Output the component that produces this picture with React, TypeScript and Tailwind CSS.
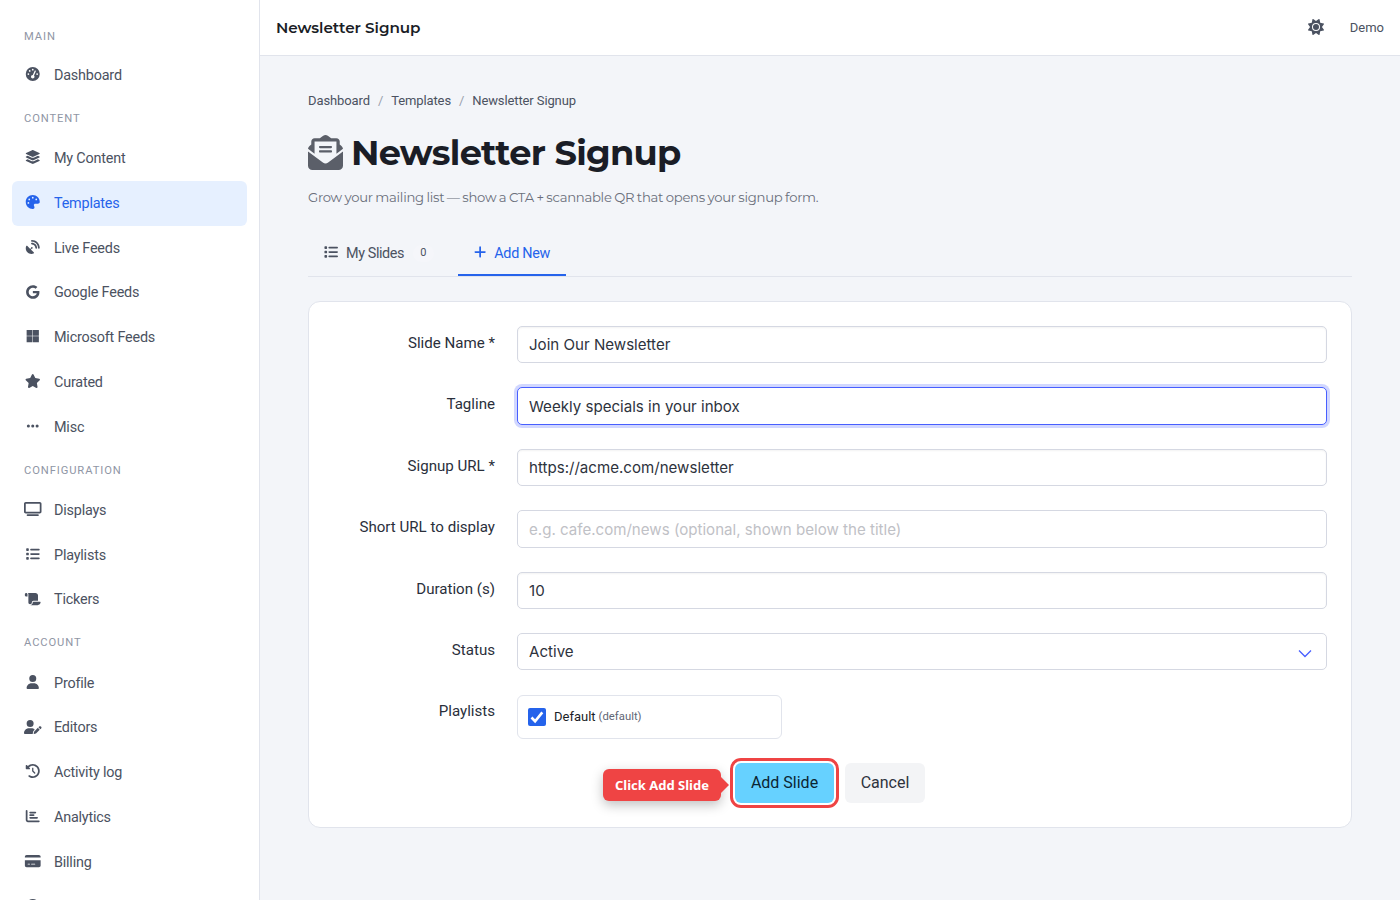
import { useState } from 'react';
import type { ReactNode } from 'react';
import type { IconType } from 'react-icons';
import {
  FaChartBar,
  FaCircleQuestion,
  FaClockRotateLeft,
  FaCreditCard,
  FaEllipsis,
  FaEnvelopeOpenText,
  FaGaugeHigh,
  FaGoogle,
  FaLayerGroup,
  FaList,
  FaMicrosoft,
  FaPalette,
  FaPlus,
  FaSatelliteDish,
  FaScroll,
  FaStar,
  FaSun,
  FaTv,
  FaUser,
  FaUserPen,
} from 'react-icons/fa6';

type NavItem = { label: string; icon: IconType; active?: boolean };

const sections: { title: string; items: NavItem[] }[] = [
  { title: 'Main', items: [{ label: 'Dashboard', icon: FaGaugeHigh }] },
  {
    title: 'Content',
    items: [
      { label: 'My Content', icon: FaLayerGroup },
      { label: 'Templates', icon: FaPalette, active: true },
      { label: 'Live Feeds', icon: FaSatelliteDish },
      { label: 'Google Feeds', icon: FaGoogle },
      { label: 'Microsoft Feeds', icon: FaMicrosoft },
      { label: 'Curated', icon: FaStar },
      { label: 'Misc', icon: FaEllipsis },
    ],
  },
  {
    title: 'Configuration',
    items: [
      { label: 'Displays', icon: FaTv },
      { label: 'Playlists', icon: FaList },
      { label: 'Tickers', icon: FaScroll },
    ],
  },
  {
    title: 'Account',
    items: [
      { label: 'Profile', icon: FaUser },
      { label: 'Editors', icon: FaUserPen },
      { label: 'Activity log', icon: FaClockRotateLeft },
      { label: 'Analytics', icon: FaChartBar },
      { label: 'Billing', icon: FaCreditCard },
      { label: '', icon: FaCircleQuestion },
    ],
  },
];

function Sidebar() {
  return (
    <aside className="w-[260px] shrink-0 overflow-hidden border-r border-[#e1e4ec] bg-white px-3 pt-[15px]">
      {sections.map(section => (
        <div key={section.title} className="group">
          <p className="flex h-[38.3px] items-center px-3 pt-[4px] text-[11.2px] tracking-[0.9px] text-[#8f96a5] uppercase group-first:pt-[7px] group-last:pt-[3px]">
            {section.title}
          </p>
          {section.items.map(({ label, icon: Icon, active }) => (
            <a
              key={label}
              className={`flex h-[44.8px] items-center rounded-md px-3 text-[14.4px] tracking-[-0.2px] ${
                active ? 'bg-[#e6f0ff] text-[#2563eb]' : 'text-[#4b5261]'
              }`}
            >
              <span className="mr-[10px] flex w-5 justify-center pr-[2px] pb-[3px]">
                <Icon className="h-[14px] w-[17.5px] shrink-0" />
              </span>
              {label}
            </a>
          ))}
        </div>
      ))}
    </aside>
  );
}

function Row({ label, children }: { label: string; children: ReactNode }) {
  return (
    <div className="flex gap-[22px]">
      <label className="w-[162px] shrink-0 pt-[5px] text-right text-[15.1px] leading-6 text-[#2a2f3b] last:pt-[6px]">
        {label}
      </label>
      <div className="flex-1">{children}</div>
    </div>
  );
}

const inputClass =
  'block h-[37.4px] w-full rounded-[5px] border border-[#d5d8e2] bg-white px-[11px] font-[Inter,sans-serif] text-[15.1px] text-[#2e333d] outline-none placeholder:text-[#bfc1c6]';

export default function App() {
  const [checked, setChecked] = useState(true);

  return (
    <div className="flex h-screen overflow-hidden bg-[#f3f5f9] font-[Roboto,sans-serif] text-[#1a1d26]">
      <Sidebar />

      <div className="min-w-0 flex-1">
        <header className="flex h-14 items-center justify-between border-b border-[#e1e4ec] bg-white px-4">
          <p className="pt-[2px] font-[Montserrat,Inter,sans-serif] text-[15.2px] font-semibold tracking-[-0.04px]">
            Newsletter Signup
          </p>
          <div className="flex items-center gap-[26px] text-[13px] text-[#4b5261]">
            <FaSun size={16} className="mb-[2px]" />
            <span>Demo</span>
          </div>
        </header>

        <main className="px-12 pt-[34px]">
          <nav className="flex h-[22px] items-center text-[13px] tracking-[-0.11px] text-[#4b5261]">
            <a>Dashboard</a>
            <span className="px-2 text-[#9aa0ad]">/</span>
            <a>Templates</a>
            <span className="px-2 text-[#9aa0ad]">/</span>
            <a>Newsletter Signup</a>
          </nav>

          <h1 className="mt-[20px] flex h-[42px] items-center gap-[8px] font-[Montserrat,Inter,sans-serif] text-[35.2px] font-bold tracking-[-0.72px]">
            <FaEnvelopeOpenText className="mb-[2px] h-[35px] w-[35px] text-[#5b5f69]" />
            Newsletter Signup
          </h1>
          <p className="mt-[13px] h-5 font-[Montserrat,Inter,sans-serif] text-[13.2px] leading-5 tracking-[-0.27px] text-[#6a6f7b] [word-spacing:-0.6px]">
            Grow your mailing list — show a CTA + scannable QR that opens your signup form.
          </p>

          <div className="mt-[22px] flex h-[48px] items-stretch border-b border-[#e1e4ec] text-[14.4px]">
            <a className="flex w-[150px] items-center pt-[2px] pl-4 tracking-[-0.4px] text-[#4b5261]">
              <FaList size={14} className="mr-2 mb-[3px]" />
              My Slides
              <span className="mb-px ml-[8.5px] flex h-[17px] w-[21px] items-center justify-center rounded-full bg-[#f5f6fa] text-[11px]">
                0
              </span>
            </a>
            <a className="flex items-center gap-2 border-b-2 border-[#2563eb] px-4 pt-[4px] tracking-[-0.3px] text-[#2563eb]">
              <FaPlus className="mb-[4px] h-[14px] w-[12.25px]" />
              Add New
            </a>
          </div>

          <section className="mt-6 h-[527px] rounded-xl border border-[#e1e4ec] bg-white p-6">
            <form className="flex flex-col gap-6" onSubmit={e => e.preventDefault()}>
              <Row label="Slide Name *">
                <input className={`${inputClass} shadow-[inset_0_1px_2px_rgba(10,10,10,0.05)]`} defaultValue="Join Our Newsletter" />
              </Row>
              <Row label="Tagline">
                <input
                  className="block h-[37.4px] w-full rounded-[5px] border border-[#485fff] bg-white px-[11px] font-[Inter,sans-serif] text-[15.1px] text-[#2e333d] shadow-[0_0_0_3px_rgba(72,95,255,0.25)] outline-none"
                  defaultValue="Weekly specials in your inbox"
                />
              </Row>
              <Row label="Signup URL *">
                <input className={`${inputClass} shadow-[inset_0_1px_2px_rgba(10,10,10,0.05)]`} defaultValue="https://acme.com/newsletter" />
              </Row>
              <Row label="Short URL to display">
                <input className={`${inputClass} pt-[1.5px]`} placeholder="e.g. cafe.com/news (optional, shown below the title)" />
              </Row>
              <Row label="Duration (s)">
                <input className={`${inputClass} shadow-[inset_0_1px_2px_rgba(10,10,10,0.05)]`} defaultValue="10" />
              </Row>
              <Row label="Status">
                <div className={`${inputClass} flex items-center justify-between pt-[1.5px] pr-[14px]`}>
                  Active
                  <svg width="14" height="9" viewBox="0 0 14 9" fill="none" stroke="#485fff" strokeWidth="1.3" className="mt-[2px]">
                    <path d="M1 1.5l6 6 6-6" />
                  </svg>
                </div>
              </Row>
              <Row label="Playlists">
                <label className="mt-[0.6px] flex h-[44px] w-[265px] items-center rounded-md border border-[#e1e4ec] px-[10px] text-[13px]">
                  <input type="checkbox" className="sr-only" checked={checked} onChange={() => setChecked(!checked)} />
                  <span className="mr-2 flex size-[18px] items-center justify-center rounded-[2px] bg-[#2563eb]">
                    {checked && (
                      <svg width="14" height="14" viewBox="0 0 14 14" fill="none" stroke="white" strokeWidth="2.6">
                        <path d="M1.5 7.5l3.6 3.7L12.3 2.4" />
                      </svg>
                    )}
                  </span>
                  Default
                  <span className="ml-[3px] pt-[2px] text-[11.3px] text-[#5f6675]">(default)</span>
                </label>
              </Row>

              <div className="flex h-10 items-center pl-[270px]">
                <div className="relative mt-1 flex h-8 w-[118px] items-center justify-center rounded-md bg-[#ef4444] pt-px font-['Noto_Sans',sans-serif] text-[13px] font-bold text-white shadow-[0_4px_12px_rgba(0,0,0,0.25)]">
                  Click Add Slide
                  <span className="absolute top-2 left-full border-y-8 border-l-8 border-y-transparent border-l-[#ef4444]" />
                </div>
                <button className="ml-[14px] h-10 w-[99px] rounded-md bg-[#66d1ff] text-base text-[#0b2533] outline-3 outline-offset-2 outline-[#ef4444]">
                  Add Slide
                </button>
                <button className="ml-[11px] h-10 w-20 rounded-md bg-[#f3f4f6] text-base text-[#2e333d]">Cancel</button>
              </div>
            </form>
          </section>
        </main>
      </div>
    </div>
  );
}
